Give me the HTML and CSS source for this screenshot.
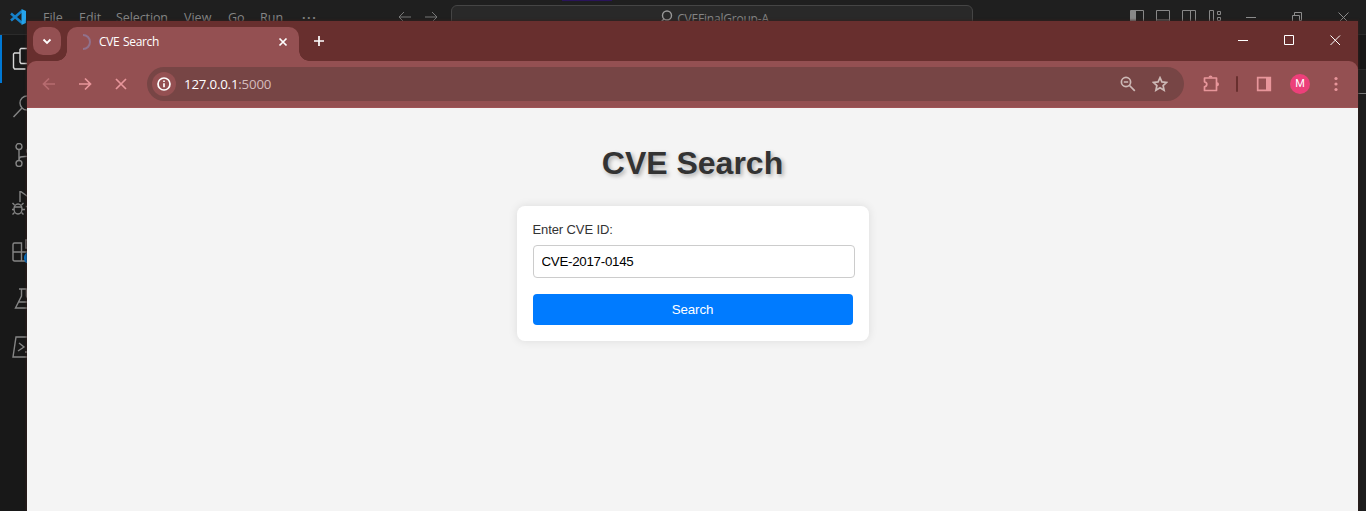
FILE: index.html
```html
<!DOCTYPE html>
<html lang="en">
<head>
<meta charset="utf-8">
<title>CVE Search</title>
<link rel="stylesheet" href="styles.css">
</head>
<body>
<div class="desktop">
  <div class="editor">
    <header class="editor-title">
      <svg class="vs-logo" width="18" height="18" viewBox="0 0 18 18"><path d="M2 5.500 13 15M2 12.500 13 3" stroke="#1681c9" stroke-width="2.500" fill="none"/><path d="M12.500 1 17 3v12l-4.500 2z" fill="#25a4ec"/></svg>
      <nav class="menu"><span class="m-file">File</span><span class="m-edit">Edit</span><span class="m-selection">Selection</span><span class="m-view">View</span><span class="m-go">Go</span><span class="m-run">Run</span><span class="m-more">···</span></nav>
      <svg class="history" width="42" height="14" viewBox="0 0 42 14"><path d="M14 7H2M7 2 2 7l5 5M28 7h12M35 2l5 5-5 5"/></svg>
      <div class="command"><svg width="14" height="14" viewBox="0 0 14 14"><circle cx="8" cy="5.500" r="4.500"/><path d="M5 9 1 13"/></svg><span>CVEFinalGroup-A</span></div>
      <div class="layout-icons">
        <svg width="14" height="13" viewBox="0 0 14 13"><path d="M.5.5h13v12H.5z"/><path class="solid" d="M1 1h5v11H1z"/></svg>
        <svg width="14" height="13" viewBox="0 0 14 13"><path d="M.5.5h13v12H.5zM1 10h12"/></svg>
        <svg width="14" height="13" viewBox="0 0 14 13"><path d="M.5.5h13v12H.5zM8.500 1v11"/></svg>
        <svg width="14" height="13" viewBox="0 0 14 13"><path d="M1.500.500h4v12h-4zM9.500 1.500h3v3h-3zM9.500 7.500h3v3h-3z"/></svg>
      </div>
      <svg class="editor-controls" width="104" height="12" viewBox="0 0 104 12"><path d="M0 5.500h10M46.500 3.500h7v8h-7zM48.500 3V.5h7v8H54M92.500.5l10 10m0-10-10 10"/></svg>
      <i class="accent"></i>
    </header>
    <div class="editor-main">
      <aside class="activity">
        <div class="act active"><svg viewBox="0 0 24 24"><path d="M8 6H2.500L1.500 7v13.500L2.500 22h11M9 1.500h8.500l5 5v10H9L8 15V2.500z"/></svg></div>
        <div class="act"><svg viewBox="0 0 24 24"><circle cx="15" cy="8" r="7"/><path d="M10 13 1.500 22"/></svg></div>
        <div class="act"><svg viewBox="0 0 24 24"><circle cx="7" cy="3.500" r="3"/><circle cx="7" cy="20.500" r="3"/><circle cx="18" cy="8" r="3"/><path d="M7 6.500v11c0-4 2-4 6-4 3 0 5-1 5-2.500"/></svg></div>
        <div class="act"><svg viewBox="0 0 24 24"><path d="M8 11V0l14 10-8 6"/><ellipse cx="6" cy="18" rx="4" ry="5"/><path d="M2 16h8M2 18.500H0m10 0h3M2.500 14 .5 12m9 2 2-2M2.500 21.500l-2 2m9-2 2 2"/></svg></div>
        <div class="act"><svg viewBox="0 0 24 24"><path d="M1 5.500Q1 4 2.500 4h7v18h-7Q1 22 1 20.500zM1 13h18v9H9.500M14 1h8v8h-8z"/><circle class="badge" cx="19" cy="19" r="7"/></svg></div>
        <div class="act"><svg viewBox="0 0 24 24"><path d="M7 2h10M9.500 2v7L3.500 21h17l-6-12V2M6 15h12"/></svg></div>
        <div class="act"><svg viewBox="0 0 24 24"><path d="M4 2h19l-3 20H1zM7 8l5 4-6 4M13 17h4"/></svg></div>
      </aside>
      <div class="editor-edge"><div class="edge-tabs"></div><div class="edge-crumbs"></div><div class="edge-code"></div></div>
    </div>
  </div>

  <div class="browser">
    <div class="tabstrip">
      <div class="tab-search"><svg width="12" height="12" viewBox="0 0 12 12"><path d="m2.500 4.500 3.500 3.500 3.500-3.500"/></svg></div>
      <div class="tab">
        <svg class="spinner" width="16" height="16" viewBox="0 0 16 16"><path d="M8 1a7 7 0 0 1 0 14"/></svg>
        <span class="tab-title">CVE Search</span>
        <svg class="tab-close" width="10" height="10" viewBox="0 0 10 10"><path d="m1.500 1.500 7 7m0-7-7 7"/></svg>
      </div>
      <svg class="new-tab" width="12" height="12" viewBox="0 0 12 12"><path d="M6 1v10M1 6h10"/></svg>
      <svg class="window-controls" width="103" height="12" viewBox="0 0 103 12"><path d="M0 6.500h10M46.500 1.500h9v9h-9zM92.500 1.500l9.500 9.500m0-9.500-9.500 9.500"/></svg>
    </div>
    <div class="toolbar">
      <svg class="nav dim" width="14" height="14" viewBox="0 0 14 14"><path d="M13 7H2M7 1.500 1.500 7 7 12.500"/></svg>
      <svg class="nav" width="14" height="14" viewBox="0 0 14 14"><path d="M1 7h11M7 1.500 12.500 7 7 12.500"/></svg>
      <svg class="nav stop" width="14" height="14" viewBox="0 0 14 14"><path d="m2 2 10 10m0-10L2 12"/></svg>
      <div class="omnibox">
        <div class="site-info"><svg width="14" height="14" viewBox="0 0 14 14"><circle cx="7" cy="7" r="6"/><path d="M7 6.200v4M7 3.500v1.600"/></svg></div>
        <span class="url">127.0.0.1<b>:5000</b></span>
        <svg class="zoom-out" width="16" height="16" viewBox="0 0 16 16"><circle cx="6" cy="6" r="4.600"/><path d="m9.500 9.500 5.300 5.300M3.800 6h4.400"/></svg>
        <svg class="star" width="16" height="16" viewBox="0 0 16 16"><path d="m8 1.700 1.900 4.200 4.700.5-3.500 3.100 1 4.700L8 11.800l-4.100 2.400 1-4.700-3.500-3.100 4.700-.5z"/></svg>
      </div>
      <svg class="puzzle" width="18" height="18" viewBox="0 0 18 18"><path d="M2.500 3h12v12.500h-12v-3.700q2.300-.5 2.300-2.500T2.500 6.800z"/><path class="fill" d="M6.500 2.500a2 2 0 0 1 4 0zM15 7.300a2 2 0 0 1 0 4z"/></svg>
      <i class="divider"></i>
      <svg class="panel" width="16" height="16" viewBox="0 0 16 16"><path d="M1.700 1.700h12.600v12.600H1.700z"/><path class="fill" d="M10 1.500h4.500v13H10z"/></svg>
      <div class="avatar">M</div>
      <svg class="kebab" width="4" height="16" viewBox="0 0 4 16"><circle cx="2" cy="2.500" r="1.600"/><circle cx="2" cy="8" r="1.600"/><circle cx="2" cy="13.500" r="1.600"/></svg>
    </div>
    <main class="page">
      <h1>CVE Search</h1>
      <form class="card">
        <label for="cve">Enter CVE ID:</label>
        <input id="cve" type="text" value="CVE-2017-0145">
        <button type="button">Search</button>
      </form>
    </main>
  </div>
</div>
</body>
</html>
```

FILE: styles.css
```css
* { box-sizing: border-box; }
body { margin: 0; font-family: "Open Sans", "Noto Sans", sans-serif; }
svg { display: block; flex: none; fill: none; }
.desktop { position: relative; width: 1366px; height: 511px; overflow: hidden; background: #181818; }

/* Editor behind the browser */
.editor { display: flex; flex-direction: column; height: 511px; }
.editor-title { position: relative; display: flex; align-items: flex-start; height: 35px; padding-left: 9px; background: #1f1f1f; border-bottom: 1px solid #2b2b2b; color: #858585; }
.vs-logo { margin-top: 8px; }
.menu { display: flex; width: 371px; padding: 9px 0 0 16px; font-size: 12.5px; line-height: 18px; white-space: nowrap; }
.m-file { width: 36px; }
.m-edit { width: 37px; }
.m-selection { width: 68px; letter-spacing: -.1px; }
.m-view { width: 44px; }
.m-go { width: 32px; }
.m-run { width: 42px; }
.m-more { font-weight: 700; letter-spacing: 1.5px; }
.history { margin: 10px 0 0 -1px; stroke: #777; }
.command { display: flex; justify-content: center; width: 522px; height: 25px; margin: 5px 0 0 12px; padding: 4px 0 0 4px; border: 1px solid #454545; border-radius: 6px; background: #292929; font-size: 12px; line-height: 17px; letter-spacing: -.2px; }
.command svg { margin-right: 4px; stroke: #999; stroke-width: 1.4; }
.layout-icons { display: flex; gap: 12px; margin: 10px 0 0 157px; stroke: #888; }
.layout-icons .solid { fill: #888; stroke: none; }
.editor-controls { margin: 12px 0 0 24px; stroke: #8c8c8c; }
.accent { position: absolute; left: 562px; top: 0; width: 50px; height: 1px; background: #29145a; box-shadow: 0 0 1px #29145a; }
.editor-main { display: flex; justify-content: space-between; flex: 1; }
.activity { width: 48px; }
.act { display: flex; align-items: center; justify-content: center; height: 48px; stroke: #858585; stroke-width: 1.4; }
.act svg { width: 24px; height: 24px; }
.act.active { border-left: 2px solid #0078d4; padding-right: 2px; stroke: #d7d7d7; }
.badge { fill: #0078d4; stroke: none; }
.editor-edge { width: 10px; background: #1f1f1f; }
.edge-tabs { height: 35px; background: #181818; border-bottom: 1px solid #2b2b2b; }
.edge-crumbs { height: 24px; border-bottom: 1px solid #777; }
.edge-code { height: 417px; background: #1d1d1d; }

/* Browser window */
.browser { position: absolute; left: 27px; top: 21px; display: flex; flex-direction: column; width: 1331px; height: 490px; background: #682f2e; box-shadow: 0 0 2px 1px rgba(55, 30, 28, .65); }
.tabstrip { display: flex; align-items: flex-start; height: 40px; padding: 6px 0 0 6px; stroke: #fff; }
.tab-search { display: flex; align-items: center; justify-content: center; width: 28px; height: 28px; border-radius: 10px; background: #945052; stroke-width: 1.8; }
.tab { position: relative; display: flex; align-items: center; width: 232px; height: 34px; margin-left: 6px; padding: 0 11px 4px 8px; border-radius: 10px 10px 0 0; background: #945052; color: #fff; }
.tab::before, .tab::after { content: ""; position: absolute; bottom: 0; width: 10px; height: 10px; }
.tab::before { left: -10px; background: radial-gradient(circle at 0 0, transparent 9.5px, #945052 10px); }
.tab::after { right: -10px; background: radial-gradient(circle at 100% 0, transparent 9.5px, #945052 10px); }
.spinner { stroke: #91718c; stroke-width: 2; }
.tab-title { flex: 1; margin-left: 8px; font-size: 12px; line-height: 16px; letter-spacing: -.35px; word-spacing: 1px; }
.tab-close { stroke-width: 1.7; }
.new-tab { margin: 8px 0 0 14px; stroke-width: 1.7; }
.window-controls { margin: 7px 0 0 913px; }
.toolbar { display: flex; align-items: center; height: 47px; padding: 0 20px 0 15px; border-radius: 9px 9px 0 0; background: #945052; border-bottom: 1px solid #9f5356; stroke: #e8969b; }
.nav { margin-right: 22px; stroke-width: 1.7; }
.nav.dim { stroke: #b76c70; }
.nav.stop { margin-right: 19px; }
.omnibox { display: flex; flex: none; align-items: center; width: 1037px; height: 34px; padding: 0 16px 0 5px; border-radius: 17px; background: #774545; }
.site-info { display: flex; align-items: center; justify-content: center; width: 24px; height: 24px; border-radius: 50%; background: #945052; stroke: #fff; stroke-width: 1.7; }
.url { flex: 1; margin-left: 8px; color: #fff; font-size: 13.3px; line-height: 18px; letter-spacing: -.2px; }
.url b { color: #d5bcbd; font-weight: 400; }
.zoom-out, .star { stroke: #cdb9b6; stroke-width: 1.7; }
.zoom-out { margin-right: 16px; }
.puzzle { flex: none; margin-left: 18px; stroke-width: 1.7; stroke-linejoin: round; }
.puzzle .fill, .panel .fill { fill: #e8969b; stroke: none; }
.divider { flex: none; width: 2px; height: 16px; margin: 0 18px 0 16px; border-radius: 1px; background: #682f2e; }
.panel { stroke-width: 1.7; }
.avatar { display: flex; flex: none; align-items: center; justify-content: center; width: 20px; height: 20px; margin-left: 18px; border-radius: 50%; background: #ec407a; color: #fff; font: 11px/20px Roboto, sans-serif; }
.kebab { margin-left: 24px; fill: #e8969b; stroke: none; }

/* Search page */
.page { flex: 1; padding-top: 37px; background: #f4f4f4; color: #333; font-family: "Liberation Sans", Arial, sans-serif; }
h1 { margin: 0 0 24px; font-size: 32px; line-height: 37px; text-align: center; text-shadow: 2px 2px 4px rgba(0, 0, 0, .3); }
.card { width: 352px; height: 135px; margin: 0 auto; padding: 16px; border-radius: 8px; background: #fff; box-shadow: 0 0 10px rgba(0, 0, 0, .1); }
label { display: block; margin-bottom: 8px; font-size: 13px; line-height: 15px; letter-spacing: -.1px; }
input { display: block; width: 322px; height: 33px; margin-bottom: 16px; padding: 8px; border: 1px solid #ccc; border-radius: 4px; background: #fff; color: #000; font: 13.333px "Liberation Sans", Arial, sans-serif; letter-spacing: -.28px; }
button { display: block; width: 320px; height: 31px; padding: 0; border: 0; border-radius: 4px; background: #007bff; color: #fff; font: 13.333px "Liberation Sans", Arial, sans-serif; letter-spacing: -.15px; }
```
